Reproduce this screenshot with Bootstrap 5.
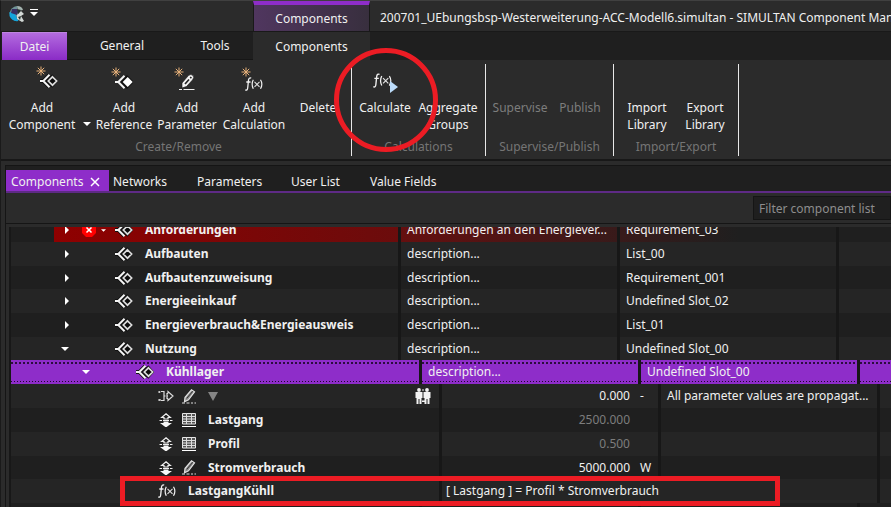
<!DOCTYPE html>
<html lang="de">
<head>
<meta charset="utf-8">
<meta name="viewport" content="width=device-width, initial-scale=1">
<title>SIMULTAN Component Manager</title>
<link rel="stylesheet" href="https://cdn.jsdelivr.net/npm/bootstrap@5.3.0/dist/css/bootstrap.min.css">
<style>
body{background:#2b2b2b;color:#f0f0f0;font:12px/17px "Noto Sans","Open Sans",sans-serif;border-top:1px solid #404040;border-left:1px solid #1a1a1a}
button,input{font:inherit;color:inherit}
.plain{background:none;border:0;padding:0;color:inherit;white-space:nowrap}
svg{display:block;overflow:visible}
.title-bar{height:30px}
.quick{width:252px}
.context-tab{width:117px;border-top:4px solid #8e2dc9;border-left:1px solid #191919;border-right:1px solid #191919;background:linear-gradient(90deg,#50365f,#382f3e)}
.title-text{padding:8px 0 0 10px}
.menu-tabs{height:29px;background:#1f1f1f;border-top:1px solid #191919}
.menu-tabs .plain{border-bottom:1px solid #161616}
.menu-tabs .file-tab{width:65px;margin-left:1px;background:linear-gradient(#b36bdf,#8a2bc6);border:1px solid #bd85e0;border-width:1px 0 0}
.tab-general{width:110px}.tab-tools{width:76px}
.menu-tabs .tab-active{width:117px;background:#2b2b2b;border:0}
.ribbon{height:101px;padding:4px 0 3px;border-bottom:2px solid #181818}
.ribbon-group{border-right:1px solid #e8e8e8;height:92px}
.g-create{width:351px;padding-left:5px}.g-calc{width:134px}.g-super{width:128px}.g-io{width:125px}
.tools{height:74px;padding-top:1px}
.tool{display:flex;flex-direction:column;align-items:center;justify-content:flex-start;text-align:center;line-height:17px}
.tool .pic{height:34px;width:32px;flex:none}
.w-xl{width:88px}.w-l{width:68px}.w-p{width:66px}.w-m{width:60px}.w-s{width:58px}.w-xs{width:52px}
.group-name{color:#757575;text-align:center;line-height:18px}
.off{color:#7d7d7d!important}
.panel-box{margin:4px 0 0 4px;border-top:1px solid #151515;border-left:1px solid #151515;min-height:0}
.doc-tabs{height:27px;padding-top:4px;background:#1f1f1f;border-bottom:2px solid #5e2a86}
.doc-tabs .plain{height:21px;text-align:left;padding-top:2px}
.doc-tabs .doc-active{width:103px;padding-left:5px;background:#8e2dc9}
.d-net{width:84px}.d-par{width:94px}.d-user{width:79px}
.filter-bar{height:31px;padding:3px 0;border-bottom:1px solid #151515}
.filter-bar input{width:138px;height:24px;background:#1f1f1f;border:1px solid #151515;padding:0 5px}
.filter-bar input::placeholder{color:#8d8d8d;opacity:1}
.tree-box{margin:3px 0 0 3px;border-left:2px solid #181818;overflow:hidden;min-height:0}
.tree{margin-top:-9px}
.tree table{table-layout:fixed;width:100%;border-collapse:separate;border-spacing:0}
.tree td,.tree th{height:24px;padding:0 0 0 6px;line-height:18px;border-right:3px solid #171717;white-space:nowrap;overflow:hidden;vertical-align:middle;font-weight:400}
.tree th{font-weight:700;padding-left:0}
.tree td:last-child{border-right:0}
.tree .short td,.tree .short th{height:23px}
.even{background:#252525}.odd{background:#1f1f1f}
.c-main{width:219px}.c1{width:390px}.c2{width:411px}.c3{width:431px}
.name-cell{display:flex;align-items:center;height:18px}
.exp{width:54px;margin-left:50px;flex:none}
.exp2{width:54px;margin-left:71px;flex:none}
.ico{width:18px;flex:none}
.gap-name{margin-left:12px}
.lead3{margin-left:147px}
.fault-mark{margin:0 4px 0 12px}
.fault th{background:linear-gradient(90deg,#1f1f1f 43px,#8f0000 43px,#6b0c0c)}
.fault td:nth-child(2){background:linear-gradient(90deg,#650f0f,#381a1a)}
.fault td:nth-child(3){background:linear-gradient(90deg,#381a1a,#1f1f1f 55%)}
.picked th,.picked td{background:repeating-linear-gradient(90deg,#2b0d3d 0 2px,transparent 2px 4px) 0 2px/100% 2px no-repeat,repeating-linear-gradient(90deg,#1d092a 0 1px,transparent 1px 3px) 0 21px/100% 1px no-repeat,#8e2dc9}
.unit{display:inline-block;width:18px;margin-left:10px}
.ring{position:absolute;left:333px;top:47px;width:104px;height:104px;border:5px solid #ec1c24;border-radius:50%;pointer-events:none}
.box{position:absolute;left:119px;top:475px;width:660px;height:30px;border:5px solid #ec1c24;pointer-events:none}
</style>
<script src="https://cdn.jsdelivr.net/npm/bootstrap@5.3.0/dist/js/bootstrap.bundle.min.js"></script>
</head>
<body class="d-flex flex-column vh-100 overflow-hidden position-relative">
<svg width="0" height="0" class="position-absolute" aria-hidden="true">
<defs>
<symbol id="star" viewBox="0 0 10 10"><path d="M5 .5v9M.5 5h9M1.800 1.800l6.400 6.400M8.200 1.800L1.800 8.200" stroke="#e8b27a" stroke-width="1" fill="none"/></symbol>
<symbol id="comp" viewBox="0 0 18 14"><path d="M0 7h4M9.500 1L3.500 7l6 6" stroke="#111" stroke-width="4" fill="none"/><path d="M12.300 .2L18.300 7l-6 6.800L6 7z" fill="#0c0c0c"/><path d="M0 7h4M9.500 .8L3.300 7l6.200 6.200" stroke="#f4f4f4" stroke-width="2" fill="none"/><path d="M12.500 2.800L16.700 7l-4.200 4.200L8.300 7z" fill="none" stroke="#dcdcdc" stroke-width="1.700"/></symbol>
<symbol id="ref" viewBox="0 0 18 14"><path d="M12 0l7 7-7 7-7-7z" fill="#111"/><path d="M0 7h4M9.500 .8L3.300 7l6.200 6.200" stroke="#f4f4f4" stroke-width="2" fill="none"/><path d="M12.700 2L17.700 7l-5 5-5-5z" fill="#fff"/></symbol>
<symbol id="pen" viewBox="0 0 16 16"><path d="M3 9L9.500 1.500q2.500-2 4.500 0 1.500 2-.5 4.500L7.500 12.500 3 14z" fill="#f4f4f4" stroke="#111" stroke-width=".6"/><path d="M6 10L10 5.500M11.300 4.200l1-1.200" stroke="#222" stroke-width="1.700"/><path d="M0 15.500h3M4.500 15.500h11" stroke="#eee" stroke-width="1"/></symbol>
<symbol id="pencil" viewBox="0 0 14 15"><path d="M3 8.500L9.500 .8l3 2L6.500 10.800 2.500 12.800z" fill="#888" stroke="#e2e2e2" stroke-width="1.200"/><path d="M4.800 9.300L10.800 2.200" stroke="#222" stroke-width=".8"/><path d="M0 14h3M4.500 14h3M9 14h2M12.500 14H14" stroke="#ddd"/></symbol>
<symbol id="updown" viewBox="0 0 13 14"><path d="M6.500 .8L10.800 4.500H8.500V6h-4V4.500H2.200z" fill="none" stroke="#eee" stroke-width="1.200"/><path d="M0 7.500h2.500M3.500 7.500h6M10.500 7.500H13" stroke="#eee"/><path d="M4 8.500h5V10h3.500l-6 4.500L.5 10H4z" fill="#f6f6f6"/></symbol>
<symbol id="sheet" viewBox="0 0 14 14"><path d="M.5.5h13v10.500H.5z" fill="#555" stroke="#e8e8e8"/><path d="M0 3.500h14M0 6h14M0 8.500h14M4.500 0v11M9.500 0v11" stroke="#ddd"/><path d="M0 13.500h14" stroke="#fff"/></symbol>
<symbol id="tri" viewBox="0 0 4 8"><path d="M0 0l4 4-4 4z" fill="#fff"/></symbol>
<symbol id="down" viewBox="0 0 8 4"><path d="M0 0h8L4 4z" fill="#fff"/></symbol>
<symbol id="fx" viewBox="0 0 18 14"><path d="M6.200 1.200Q3.900.2 3.500 3.200L2.700 11Q2.300 13.800.3 12.900M1.300 5h4.200" fill="none" stroke="#f2f2f2" stroke-width="1.300"/><path d="M8.300 2.800Q6 7 8.300 11.800M15.500 2.800Q18.200 7 15.500 11.800" fill="none" stroke="#f2f2f2" stroke-width="1.200"/><path d="M9.500 4.800l5 5M14.500 4.800l-5 5" stroke="#e2e2e2" stroke-width="1.100"/></symbol>
</defs>
</svg>

<header class="title-bar d-flex flex-shrink-0">
  <div class="quick d-flex align-items-start flex-shrink-0 ps-1">
    <svg width="17" height="18" viewBox="0 0 17 18" class="ms-1 mt-1" aria-label="SIMULTAN"><path d="M8 1Q2 2 .5 8q.5 5 6 8L9 9z" fill="#6f9296"/><path d="M.500 7l5 1 4 8Q3 17 .5 11z" fill="#14a5dc"/><path d="M3 4l7 0-2 6-6-2z" fill="#383063"/><path d="M8 1q5 0 6 4l-5 1z" fill="#a4b4b0"/><path d="M8 10l4-4 3 3-3 2 3 5-2 1-5-3z" fill="#d3d9d6"/><path d="M8 4l4 1-3 4zM9 12l3-1-1 4z" fill="#26332f"/></svg>
    <button class="plain mt-2 ms-1" aria-label="Customize quick access"><svg width="8" height="7" viewBox="0 0 8 7"><path d="M0 .5h8" stroke="#fff"/><path d="M0 3h8L4 7z" fill="#fff"/></svg></button>
  </div>
  <div class="context-tab d-flex align-items-center justify-content-center flex-shrink-0">Components</div>
  <div class="title-text text-nowrap overflow-hidden flex-fill">200701_UEbungsbsp-Westerweiterung-ACC-Modell6.simultan - SIMULTAN Component Manager</div>
</header>
<nav class="menu-tabs d-flex flex-shrink-0" aria-label="Ribbon">
  <button class="plain file-tab">Datei</button>
  <button class="plain tab-general">General</button>
  <button class="plain tab-tools">Tools</button>
  <button class="plain tab-active">Components</button>
</nav>

<section class="ribbon d-flex flex-shrink-0">
  <div class="ribbon-group g-create">
    <div class="tools d-flex">
      <button class="plain tool w-xl"><svg class="pic" viewBox="0 0 32 34"><use href="#star" x="2" y="1" width="10" height="10"/><use href="#comp" x="6" y="9" width="18" height="14"/></svg><span class="d-flex align-items-center gap-1"><span>Add<br>Component</span><svg width="8" height="4" class="mt-3 ms-1"><use href="#down"/></svg></span></button>
      <button class="plain tool w-m"><svg class="pic" viewBox="0 0 32 34"><use href="#star" x="3" y="2" width="10" height="10"/><use href="#ref" x="7" y="10" width="18" height="14"/></svg>Add<br>Reference</button>
      <button class="plain tool w-p"><svg class="pic" viewBox="0 0 32 34"><use href="#star" x="3" y="2" width="10" height="10"/><use href="#pen" x="8" y="9" width="16" height="16"/></svg>Add<br>Parameter</button>
      <button class="plain tool w-l"><svg class="pic" viewBox="0 0 32 34"><use href="#star" x="3" y="2" width="10" height="10"/><use href="#fx" x="7" y="12" width="18" height="14"/></svg>Add<br>Calculation</button>
      <button class="plain tool w-m"><span class="pic"></span>Delete</button>
    </div>
    <div class="group-name">Create/Remove</div>
  </div>
  <div class="ribbon-group g-calc">
    <div class="tools d-flex">
      <button class="plain tool w-p"><svg class="pic" viewBox="0 0 32 34"><use href="#fx" x="4" y="8" width="19" height="15"/><path d="M21 16l8 6-8 6z" fill="#bcdcfb"/></svg>Calculate</button>
      <button class="plain tool w-m"><span class="pic"></span>Aggregate<br>Groups</button>
    </div>
    <div class="group-name">Calculations</div>
  </div>
  <div class="ribbon-group g-super">
    <div class="tools d-flex">
      <button class="plain tool off w-l" disabled><span class="pic"></span>Supervise</button>
      <button class="plain tool off w-xs" disabled><span class="pic"></span>Publish</button>
    </div>
    <div class="group-name">Supervise/Publish</div>
  </div>
  <div class="ribbon-group g-io">
    <div class="tools d-flex justify-content-center">
      <button class="plain tool w-s"><span class="pic"></span>Import<br>Library</button>
      <button class="plain tool w-s"><span class="pic"></span>Export<br>Library</button>
    </div>
    <div class="group-name">Import/Export</div>
  </div>
</section>

<main class="panel-box d-flex flex-column flex-fill">
  <nav class="doc-tabs d-flex flex-shrink-0" aria-label="Panels">
    <button class="plain doc-active d-flex align-items-center gap-2">Components<svg width="8" height="8" viewBox="0 0 8 8"><path d="M0 0l8 8M8 0L0 8" stroke="#fff" stroke-width="1.500"/></svg></button>
    <button class="plain d-net ms-1">Networks</button>
    <button class="plain d-par">Parameters</button>
    <button class="plain d-user">User List</button>
    <button class="plain">Value Fields</button>
  </nav>
  <div class="filter-bar d-flex justify-content-end flex-shrink-0"><input type="text" placeholder="Filter component list" aria-label="Filter component list"></div>
  <div class="tree-box flex-fill">
    <div class="tree">
      <table>
        <colgroup><col class="c1"><col class="c-main"><col class="c-main"><col></colgroup>
        <tbody>
        <tr class="odd fault"><th scope="row"><div class="name-cell"><div class="exp d-flex align-items-center"><svg width="4" height="8" class="ms-1"><use href="#tri"/></svg><svg width="16" height="16" viewBox="0 0 16 16" class="fault-mark"><path d="M5 1h6l4 4v6l-4 4H5l-4-4V5z" fill="#f00"/><path d="M5.500 5.500l5 5M10.500 5.500l-5 5" stroke="#fff" stroke-width="1.500"/></svg><svg width="5" height="3"><use href="#down"/></svg></div><svg class="ico" height="14"><use href="#comp"/></svg><span class="gap-name">Anforderungen</span></div></th><td>Anforderungen an den Energiever...</td><td>Requirement_03</td><td></td></tr>
        <tr class="even"><th scope="row"><div class="name-cell"><div class="exp"><svg width="4" height="8" class="ms-1"><use href="#tri"/></svg></div><svg class="ico" height="14"><use href="#comp"/></svg><span class="gap-name">Aufbauten</span></div></th><td>description...</td><td>List_00</td><td></td></tr>
        <tr class="odd short"><th scope="row"><div class="name-cell"><div class="exp"><svg width="4" height="8" class="ms-1"><use href="#tri"/></svg></div><svg class="ico" height="14"><use href="#comp"/></svg><span class="gap-name">Aufbautenzuweisung</span></div></th><td>description...</td><td>Requirement_001</td><td></td></tr>
        <tr class="even"><th scope="row"><div class="name-cell"><div class="exp"><svg width="4" height="8" class="ms-1"><use href="#tri"/></svg></div><svg class="ico" height="14"><use href="#comp"/></svg><span class="gap-name">Energieeinkauf</span></div></th><td>description...</td><td>Undefined Slot_02</td><td></td></tr>
        <tr class="odd"><th scope="row"><div class="name-cell"><div class="exp"><svg width="4" height="8" class="ms-1"><use href="#tri"/></svg></div><svg class="ico" height="14"><use href="#comp"/></svg><span class="gap-name">Energieverbrauch&amp;Energieausweis</span></div></th><td>description...</td><td>List_01</td><td></td></tr>
        <tr class="even short"><th scope="row"><div class="name-cell"><div class="exp"><svg width="8" height="4"><use href="#down"/></svg></div><svg class="ico" height="14"><use href="#comp"/></svg><span class="gap-name">Nutzung</span></div></th><td>description...</td><td>Undefined Slot_00</td><td></td></tr>
        </tbody>
      </table>
      <table>
        <colgroup><col class="c2"><col class="c-main"><col class="c-main"><col></colgroup>
        <tbody><tr class="picked"><th scope="row"><div class="name-cell"><div class="exp2"><svg width="8" height="4"><use href="#down"/></svg></div><svg class="ico" height="14"><use href="#comp"/></svg><span class="gap-name">Kühllager</span></div></th><td>description...</td><td>Undefined Slot_00</td><td></td></tr></tbody>
      </table>
      <table>
        <colgroup><col class="c3"><col class="c-main"><col class="c-main"><col></colgroup>
        <tbody>
        <tr class="even"><th scope="row"><div class="name-cell"><svg class="lead3" width="16" height="14" viewBox="0 0 16 14"><path d="M0 3h2M0 11h3M3 2.500h3v9H3M6 7h1.500M9 7h1M10 4.500V2.500L15 7l-5 4.500v-2M10 4.500H9v5h1" fill="none" stroke="#ddd" stroke-width="1.200"/><path d="M1 2l2 1-2 1zM1 10l2 1-2 1z" fill="#ddd"/></svg><svg width="14" height="15" class="ms-2"><use href="#pencil"/></svg><svg width="10" height="9" viewBox="0 0 10 9" class="gap-name"><path d="M0 0h10L5 9z" fill="#858585"/></svg><svg width="16" height="16" viewBox="0 0 16 16" class="ms-auto me-2" aria-label="Shared"><g fill="#f2f2f2"><circle cx="4" cy="2" r="1.900"/><circle cx="12" cy="2" r="1.900"/><path d="M.5 4h7V10H6.500v6H4.500v-5h-1v5h-2v-6h-1zM8.500 4h7v6h-1v6h-2v-5h-1v5h-2v-6h-1zM7 1.500h2v1H7zM7 12.500h2.500v1.500H7z"/></g></svg></div></th><td class="text-end">0.000<span class="unit text-start">-</span></td><td>All parameter values are propagat...</td><td></td></tr>
        <tr class="odd"><th scope="row"><div class="name-cell"><svg class="lead3" width="16" height="14"><use href="#updown"/></svg><svg width="14" height="14" class="ms-2"><use href="#sheet"/></svg><span class="gap-name">Lastgang</span></div></th><td class="text-end off">2500.000<span class="unit"></span></td><td></td><td></td></tr>
        <tr class="even"><th scope="row"><div class="name-cell"><svg class="lead3" width="16" height="14"><use href="#updown"/></svg><svg width="14" height="14" class="ms-2"><use href="#sheet"/></svg><span class="gap-name">Profil</span></div></th><td class="text-end off">0.500<span class="unit"></span></td><td></td><td></td></tr>
        <tr class="odd short"><th scope="row"><div class="name-cell"><svg class="lead3" width="16" height="14"><use href="#updown"/></svg><svg width="14" height="15" class="ms-2"><use href="#pencil"/></svg><span class="gap-name">Stromverbrauch</span></div></th><td class="text-end">5000.000<span class="unit text-start">W</span></td><td></td><td></td></tr>
        <tr class="even"><th scope="row"><div class="name-cell"><svg class="lead3" width="18" height="14"><use href="#fx"/></svg><span class="gap-name">LastgangKühll</span></div></th><td colspan="2" class="ps-1">[ Lastgang ] = Profil * Stromverbrauch</td><td></td></tr>
        </tbody>
      </table>
      <table>
        <colgroup><col class="c2"><col class="c-main"><col class="c-main"><col></colgroup>
        <tbody><tr class="odd"><th scope="row"></th><td></td><td></td><td></td></tr></tbody>
      </table>
    </div>
  </div>
</main>
<div class="ring"></div>
<div class="box"></div>
</body>
</html>
